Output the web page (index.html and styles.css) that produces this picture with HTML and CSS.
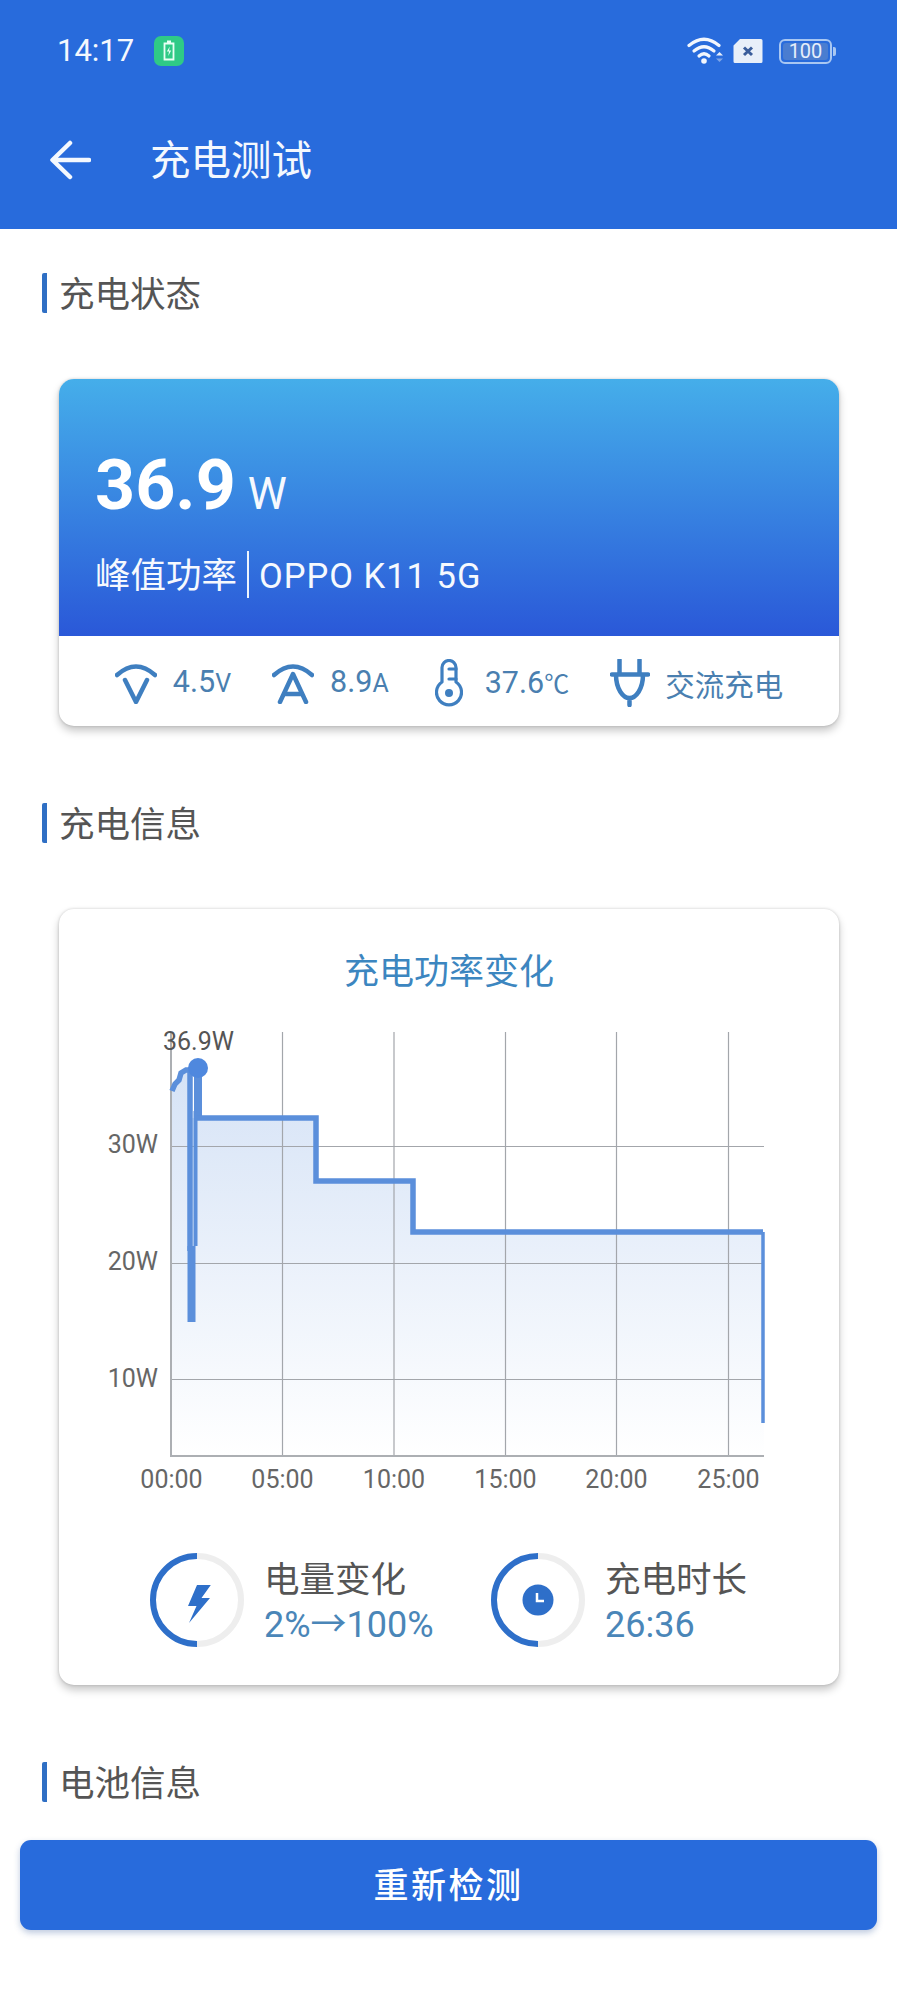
FILE: index.html
```html
<!DOCTYPE html>
<html lang="zh-CN">
<head>
<meta charset="utf-8">
<title>充电测试</title>
<link rel="stylesheet" href="styles.css">
</head>
<body>
<header class="appbar">
  <div class="status">
    <div class="status-left">
      <span class="time">14:17</span>
      <svg class="charge-badge" width="30" height="30" viewBox="0 0 30 30">
        <rect width="30" height="30" rx="7" fill="#2fca86"/>
        <path d="M13 5.500h4M10.500 7.500h9v16h-9z" fill="none" stroke="#e8fff4" stroke-width="1.800"/>
        <path d="M15.800 10.500l-3 5h2.200l-.8 4.500 3-5.400h-2.200z" fill="#e8fff4"/>
      </svg>
    </div>
    <div class="status-right">
      <svg class="wifi" width="38" height="30" viewBox="0 0 38 30">
        <g fill="none" stroke="#f2f6fd" stroke-width="3.200" stroke-linecap="round">
          <path d="M2 9.500Q17 -3 32 9.500"/>
          <path d="M7 15Q17 6.500 27 15"/>
          <path d="M12 20Q17 15.500 22 20"/>
        </g>
        <circle cx="17" cy="25" r="2.800" fill="#f2f6fd"/>
        <path d="M29 19.500l3.500 -3.500 3.500 3.500z" fill="#e8eff9"/>
        <path d="M29 22.500l3.500 3.500 3.500 -3.500z" fill="#7ea4e6"/>
      </svg>
      <svg class="sim" width="30" height="26" viewBox="0 0 30 26">
        <path d="M7 1H28a1.500 1.500 0 0 1 1.500 1.500V23.500a1.500 1.500 0 0 1 -1.500 1.500H2a1.500 1.500 0 0 1 -1.500 -1.500V7.500z" fill="#e8eff9"/>
        <path d="M11 9.500l8 7.500M19 9.500l-8 7.500" stroke="#3a5d9b" stroke-width="3" fill="none"/>
      </svg>
      <span class="battery"><span class="battery-level">100</span></span>
    </div>
  </div>
  <div class="toolbar">
    <svg class="back" width="42" height="42" viewBox="0 0 42 42">
      <path d="M40 21H5M21 4L3.500 21 21 38" fill="none" stroke="#f4f8fe" stroke-width="4.500" stroke-linecap="round" stroke-linejoin="round"/>
    </svg>
    <h1 class="page-title">充电测试</h1>
  </div>
</header>

<main>
  <h2 class="section-title section-first">充电状态</h2>

  <section class="card">
    <div class="hero">
      <div class="power"><span class="power-value">36.9</span><span class="power-unit">W</span></div>
      <div class="hero-sub"><span>峰值功率</span><span class="hero-rule"></span><span class="device">OPPO K11 5G</span></div>
    </div>
    <div class="stats">
      <div class="stat">
        <svg width="42" height="42" viewBox="0 0 42 42"><g class="stat-icon">
          <path d="M2 13Q21 -4 40 13"/><path d="M10 18L21 40 32 18"/>
        </g></svg>
        <span class="stat-text">4.5<small>V</small></span>
      </div>
      <div class="stat">
        <svg width="42" height="42" viewBox="0 0 42 42"><g class="stat-icon">
          <path d="M2 13Q21 -4 40 13"/><path d="M8 40L21 12 34 40M12.500 32H29.500"/>
        </g></svg>
        <span class="stat-text">8.9<small>A</small></span>
      </div>
      <div class="stat stat-temp">
        <svg width="28" height="48" viewBox="0 0 28 48"><g class="stat-icon thin">
          <path d="M7 23V8.500a7 7 0 0 1 14 0V23a12.500 12.500 0 1 1 -14 0z"/><path d="M14 10H21M14 20H21"/>
        </g><circle cx="14" cy="34" r="4" fill="#3f7fc0"/></svg>
        <span class="stat-text">37.6<small class="cjk">℃</small></span>
      </div>
      <div class="stat">
        <svg width="40" height="48" viewBox="0 0 40 48"><g class="stat-icon">
          <path d="M9.500 1V14M29.500 1V14M2 15.500H38M6 15.500C6 30 13 39 19.500 39S33 30 33 15.500M19.500 39V46"/>
        </g></svg>
        <span class="stat-text cjk">交流充电</span>
      </div>
    </div>
  </section>

  <h2 class="section-title">充电信息</h2>

  <section class="card card-chart">
    <h3 class="chart-title">充电功率变化</h3>
    <svg class="chart" width="781" height="470" viewBox="59 1025 781 470">
      <defs>
        <linearGradient id="area" gradientUnits="userSpaceOnUse" x1="0" y1="1070" x2="0" y2="1455">
          <stop offset="0" stop-color="#d6e3f6"/>
          <stop offset="1" stop-color="#ffffff"/>
        </linearGradient>
      </defs>
      <path d="M171 1092L175 1082 180 1072 186 1069H190V1117H316V1180H413V1231H764V1455H171z" fill="url(#area)"/>
      <g class="grid">
        <path d="M171 1145.500H764M171 1262.500H764M171 1378.500H764"/>
        <path d="M282.500 1031V1455M394 1031V1455M505.500 1031V1455M616.500 1031V1455M728.500 1031V1455"/>
      </g>
      <path class="axis" d="M171 1031V1455H764"/>
      <g class="line">
        <path d="M172 1090L175 1083 179 1079 181 1072 186 1069H190" stroke-width="5.500"/>
        <path d="M190 1068V1250" stroke-width="5.500"/>
        <path d="M191.500 1245V1321" stroke-width="8"/>
        <path d="M195.500 1110V1245" stroke-width="4"/>
        <path d="M198 1068V1117" stroke-width="8"/>
        <path d="M197 1117H316V1180H413V1231H763" stroke-width="5.500" stroke-linecap="butt"/>
        <path d="M763 1231V1422" stroke-width="3.500" stroke="#5f8fcf"/>
      </g>
      <circle cx="198" cy="1067" r="10" fill="#4f88de"/>
      <text class="tick tick-peak" x="163" y="1049">36.9W</text>
      <text class="tick" x="158" y="1152" text-anchor="end">30W</text>
      <text class="tick" x="158" y="1269" text-anchor="end">20W</text>
      <text class="tick" x="158" y="1386" text-anchor="end">10W</text>
      <g text-anchor="middle">
        <text class="tick" x="171.500" y="1487">00:00</text>
        <text class="tick" x="282.500" y="1487">05:00</text>
        <text class="tick" x="394" y="1487">10:00</text>
        <text class="tick" x="505.500" y="1487">15:00</text>
        <text class="tick" x="616.500" y="1487">20:00</text>
        <text class="tick" x="728.500" y="1487">25:00</text>
      </g>
    </svg>
    <div class="summary">
      <div class="summary-item">
        <svg width="94" height="94" viewBox="0 0 94 94">
          <path class="ring-track" d="M47 3A44 44 0 0 1 47 91"/>
          <path class="ring-value" d="M47 91A44 44 0 0 1 47 3"/>
          <path d="M47 32L38 53H46.500L39 70 60 45H51.500L60.800 32z" fill="#2e6fc9"/>
        </svg>
        <div class="summary-text">
          <div class="summary-label">电量变化</div>
          <div class="summary-value">2%→100%</div>
        </div>
      </div>
      <div class="summary-item">
        <svg width="94" height="94" viewBox="0 0 94 94">
          <path class="ring-track" d="M47 3A44 44 0 0 1 47 91"/>
          <path class="ring-value" d="M47 91A44 44 0 0 1 47 3"/>
          <circle cx="47" cy="47" r="15.500" fill="#2e6fc9"/>
          <path d="M46 40V48H53" fill="none" stroke="#fff" stroke-width="2.500"/>
        </svg>
        <div class="summary-text">
          <div class="summary-label">充电时长</div>
          <div class="summary-value">26:36</div>
        </div>
      </div>
    </div>
  </section>

  <h2 class="section-title">电池信息</h2>

  <button class="retest" type="button">重新检测</button>
</main>
</body>
</html>
```

FILE: styles.css
```css
* { box-sizing: border-box; }

html, body { margin: 0; padding: 0; background: #fff; }

body {
  width: 897px;
  height: 2004px;
  overflow: hidden;
  font-family: Roboto, "Noto Sans CJK SC", sans-serif;
  color: #555;
}

.cjk { font-family: "Noto Sans CJK SC", sans-serif; }

/* App bar */
.appbar {
  height: 229px;
  background: #286bdc;
  color: #f4f8fe;
}

.status {
  height: 102px;
  padding: 0 65px 0 57px;
  display: flex;
  align-items: center;
  justify-content: space-between;
}

.status-left { display: flex; align-items: center; gap: 20px; }
.time { font-size: 31px; line-height: 36px; }
.status-right { display: flex; align-items: center; }
.wifi { margin-right: 8px; }
.sim { margin-right: 16px; }

.battery {
  position: relative;
  display: block;
  width: 53px;
  height: 25px;
  padding: 2px;
  border: 2px solid #a9c7f2;
  border-radius: 6px;
}

.battery::after {
  content: "";
  position: absolute;
  right: -6px;
  top: 6px;
  width: 3px;
  height: 9px;
  background: #a9c7f2;
  border-radius: 0 2px 2px 0;
}

.battery-level {
  display: block;
  height: 100%;
  background: #4a7dd0;
  border-radius: 3px;
  color: #e6effb;
  font-size: 20px;
  line-height: 17px;
  text-align: center;
}

.toolbar {
  height: 114px;
  padding-left: 49px;
  display: flex;
  align-items: center;
  gap: 59px;
}

.back { margin-top: 2px; }

.page-title {
  margin: 4px 0 0;
  font-size: 40.500px;
  line-height: 50px;
  font-weight: 400;
  color: #f4f8fe;
}

/* Section headings */
.section-title {
  margin: 77px 0 66px 42px;
  height: 40px;
  padding: 2px 0 0 12px;
  border-left: 5px solid #2f6fc4;
  border-radius: 2px;
  font-size: 35.500px;
  line-height: 40px;
  font-weight: 400;
  color: #555;
}

.section-first { margin-top: 44px; }

/* Cards */
.card {
  margin: 0 58px 0 59px;
  background: #fff;
  border-radius: 15px;
  overflow: hidden;
  box-shadow: 0 0 3px rgba(0, 0, 0, .18), 0 5px 9px rgba(0, 0, 0, .22);
}

.hero {
  height: 257px;
  padding: 71px 0 0 36px;
  background: linear-gradient(#45aeea, #2a58d8);
  color: #f6f9fe;
}

.power { display: flex; align-items: baseline; gap: 12px; }
.power-value { font-size: 70px; line-height: 70px; font-weight: 700; color: #fff; }
.power-unit { font-size: 44px; line-height: 50px; }

.hero-sub {
  margin-top: 31px;
  display: flex;
  align-items: center;
  font-size: 35.500px;
  line-height: 47px;
  height: 47px;
}

.hero-sub > span:first-child { padding-top: 4px; }
.hero-rule { width: 2px; height: 47px; margin: 0 10px; background: #eef4fd; }
.device { font-size: 34.500px; letter-spacing: 1px; padding-top: 4px; }

.stats {
  height: 90px;
  padding-top: 3px;
  display: flex;
  align-items: center;
  justify-content: center;
  gap: 41px;
}

.stat { display: flex; align-items: center; gap: 16px; }
.stat-temp { gap: 22px; margin-left: 5px; }

.stat-icon {
  fill: none;
  stroke: #3f7fc0;
  stroke-width: 4.500;
  stroke-linecap: round;
  stroke-linejoin: round;
}

.stat-icon.thin { stroke-width: 3.200; }

.stat-text {
  font-size: 30.500px;
  line-height: 40px;
  color: #4a7fb0;
  white-space: nowrap;
}

.stat-text small { font-size: 25px; }
.stat-text.cjk { font-size: 29.500px; margin-left: -1px; }

/* Chart card */
.card-chart { padding: 39px 0 38px; }

.chart-title {
  margin: 0;
  text-align: center;
  font-size: 35px;
  line-height: 50px;
  font-weight: 400;
  color: #3c86c0;
}

.chart { display: block; margin-top: 28px; }

.grid path { fill: none; stroke: #a3a6ab; stroke-width: 1.200; }
.axis { fill: none; stroke: #acafb3; stroke-width: 2; }

.line path {
  fill: none;
  stroke: #5b8fdb;
  stroke-linejoin: miter;
}

.tick { font-size: 25px; fill: #666; }
.tick-peak { fill: #555; }

.summary {
  margin-top: 57px;
  padding-left: 91px;
  display: grid;
  grid-template-columns: 341px 1fr;
}

.summary-item { display: flex; align-items: center; gap: 20px; }
.summary-text { padding-top: 4px; }

.ring-track, .ring-value { fill: none; stroke-width: 6; }
.ring-track { stroke: #eeeeee; }
.ring-value { stroke: #2e6fc9; }

.summary-label { font-size: 35.500px; line-height: 46px; color: #555; }
.summary-value { font-size: 36px; line-height: 44px; color: #4a86b8; }

/* Button */
.retest {
  display: block;
  width: 857px;
  height: 90px;
  margin: 38px 20px 0;
  border: 0;
  padding: 0 0 5px;
  border-radius: 11px;
  background: #286bdc;
  box-shadow: 0 3px 6px rgba(40, 80, 150, .3);
  color: #fff;
  font-family: "Noto Sans CJK SC", sans-serif;
  font-size: 35px;
  font-weight: 500;
  letter-spacing: 2.500px;
}

main > .section-title:last-of-type { margin-bottom: 0; }
```
